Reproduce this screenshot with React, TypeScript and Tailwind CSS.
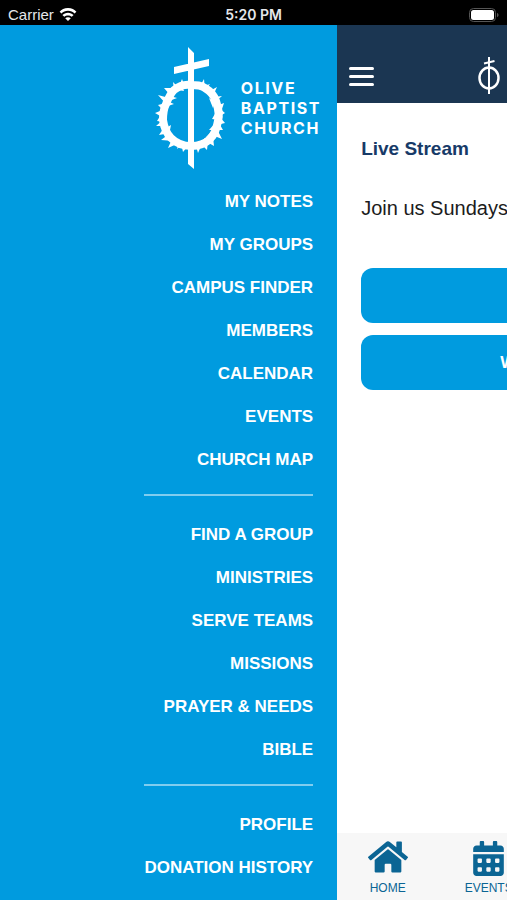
import { FaHome, FaCalendarAlt } from "react-icons/fa";

const menuGroups = [
  ["My Notes", "My Groups", "Campus Finder", "Members", "Calendar", "Events", "Church Map"],
  ["Find a Group", "Ministries", "Serve Teams", "Missions", "Prayer & Needs", "Bible"],
  ["Profile", "Donation History"],
];

function WreathCross() {
  return (
    <svg viewBox="0 0 70 122" fill="none" className="h-[122px] w-[70px]" aria-hidden="true">
      {/* Crown of thorns */}
      <path
        stroke="currentColor"
        strokeWidth="8"
        strokeLinejoin="round"
        d="M36 38C29 37 24 39 19 43C15 47 13 52 11 57C8 63 8 68 8 73C9 80 11 86 16 91C21 96 28 99 36 99C44 99 50 97 55 92C60 87 62 80 63 74C65 67 63 61 61 54C59 48 55 44 50 41C46 38 42 38 36 38Z"
      />
      <g fill="currentColor">
        <path d="M30 40 27 32 24 39ZM24 41 18 35 19 43ZM20 41 9 41 15 48ZM16 44 10 51 17 50ZM14 51 3 48 11 57ZM11 56 3 58 8 63ZM10 62 0 66 7 70ZM9 72 1 79 10 79ZM7 66 2 74 9 75ZM10 79 4 88 15 86ZM14 87 6 93 19 94ZM18 90 13 101 24 96ZM24 95 22 102 27 98ZM26 96 28 105 33 99Z" />
        <path d="M41 99 43 106 47 97ZM46 97 52 103 53 94ZM52 95 59 99 58 90ZM57 88 67 92 62 82ZM60 83 68 83 64 76ZM62 78 70 76 65 70ZM62 71 70 66 64 61ZM65 68 69 56 61 59ZM59 56 67 49 59 50ZM57 51 62 40 53 45ZM50 44 55 37 47 40ZM44 41 49 32 50 43Z" />
        <path d="M12 54 19 57 10 60ZM15 49 22 51 14 54ZM11 81 16 78 14 88ZM60 55 54 51 58 61ZM61 65 57 72 63 73ZM61 75 54 83 61 83ZM57 84 51 90 57 89ZM23 43 29 44 27 39ZM46 95 50 91 52 94Z" />
      </g>
      <path fill="currentColor" d="M33 0 39 6V122L33 117ZM19 20 54 12V19L19 27Z" />
    </svg>
  );
}

function HeaderMark() {
  return (
    <svg viewBox="0 0 24 38" fill="none" stroke="currentColor" className="h-[38px] w-6" aria-hidden="true">
      <ellipse cx="12" cy="21" rx="9.500" ry="10.500" strokeWidth="2.500" />
      <path strokeWidth="2" d="M12 0V37M7 6.500 17.500 4" />
    </svg>
  );
}

function StatusBar() {
  return (
    <header className="relative flex h-[25px] shrink-0 items-center justify-between bg-black px-2 pt-1 text-sm leading-5 text-gray-200">
      <div className="flex items-center gap-1">
        <span className="text-[15px]">Carrier</span>
        <svg viewBox="0 0 20 15" className="h-[14px] w-5 text-white" fill="currentColor" aria-label="Wi-Fi">
          <path d="M10 0C6 0 3 1.500 1 4L3 6C5 4 7 3 10 3S15 4 17 6L19 4C17 1.500 14 0 10 0ZM10 5C7.500 5 5.500 6 4 7.500L6 9.500C7 8.500 8.500 8 10 8S13 8.500 14 9.500L16 7.500C14.500 6 12.500 5 10 5ZM10 10C8.800 10 7.800 10.400 7 11L10 14 13 11C12.200 10.400 11.200 10 10 10Z" />
        </svg>
      </div>
      <span className="absolute inset-x-0 text-center font-[Inter,sans-serif] font-semibold">5:20 PM</span>
      <svg viewBox="0 0 30 14" className="h-[14px] w-[30px]" aria-label="Battery full">
        <rect x="0.500" y="0.500" width="26" height="13" rx="4" fill="none" stroke="#555" />
        <rect x="2" y="2" width="23" height="10" rx="2.500" fill="#fff" />
        <path d="M28 5C30 5.500 30 8.500 28 9Z" fill="#555" />
      </svg>
    </header>
  );
}

function SideMenu() {
  return (
    <aside className="flex w-[66.5%] shrink-0 flex-col bg-[#009bdf] pr-4 text-white">
      <div className="flex items-center gap-4 self-end pt-[22px]">
        <WreathCross />
        <div className="font-[Inter,sans-serif] text-base leading-5 font-bold tracking-widest">
          <p>OLIVE</p>
          <p>BAPTIST</p>
          <p>CHURCH</p>
        </div>
      </div>
      <nav className="flex flex-col self-end pt-[11px] pr-2">
        {menuGroups.map((items, index) => (
          <div key={items[0]}>
            {index > 0 && <hr className="mt-[13px] mb-[17px] border-t-2 border-white/50" />}
            <ul>
              {items.map((item) => (
                <li key={item}>
                  <a href="#" className="block text-right text-[17px] leading-[43px] font-bold uppercase">
                    {item}
                  </a>
                </li>
              ))}
            </ul>
          </div>
        ))}
      </nav>
    </aside>
  );
}

function HomeScreen() {
  return (
    <div className="flex w-[304px] shrink-0 flex-col bg-white">
      <header className="relative flex h-[78px] items-center justify-center bg-[#1b3652] pt-6 text-white">
        <button type="button" aria-label="Menu" className="absolute left-3 flex w-[25px] flex-col gap-[5px]">
          <span className="h-[3px] rounded-full bg-white" />
          <span className="h-[3px] rounded-full bg-white" />
          <span className="h-[3px] rounded-full bg-white" />
        </button>
        <HeaderMark />
      </header>
      <main className="flex-1 px-6 pt-8">
        <h1 className="text-[19px] leading-7 font-bold text-[#173a68]">Live Stream</h1>
        <p className="pt-[31px] text-[20px] leading-7 whitespace-nowrap text-[#1c1c1c]">Join us Sundays</p>
        <div className="flex flex-col gap-3 pt-[46px] text-[17px] font-bold text-white">
          <button type="button" aria-label="Live" className="h-[55px] rounded-xl bg-[#009bdf]" />
          <button type="button" className="h-[55px] rounded-xl bg-[#009bdf] pl-[139px] text-left">
            W
          </button>
        </div>
      </main>
      <nav className="flex h-[67px] bg-[#f7f7f7] text-xs leading-4 text-[#0b6594]">
        <a href="#" className="flex w-[101px] flex-col items-center justify-between pt-1 pb-1">
          <FaHome className="size-10" />
          <span>HOME</span>
        </a>
        <a href="#" className="flex w-[101px] flex-col items-center justify-between pt-2 pb-1">
          <FaCalendarAlt className="size-[35px]" />
          <span>EVENTS</span>
        </a>
      </nav>
    </div>
  );
}

export default function App() {
  return (
    <div className="flex min-h-screen flex-col overflow-hidden font-['Liberation_Sans',Arial,sans-serif]">
      <StatusBar />
      <div className="flex flex-1 overflow-hidden">
        <SideMenu />
        <HomeScreen />
      </div>
    </div>
  );
}
